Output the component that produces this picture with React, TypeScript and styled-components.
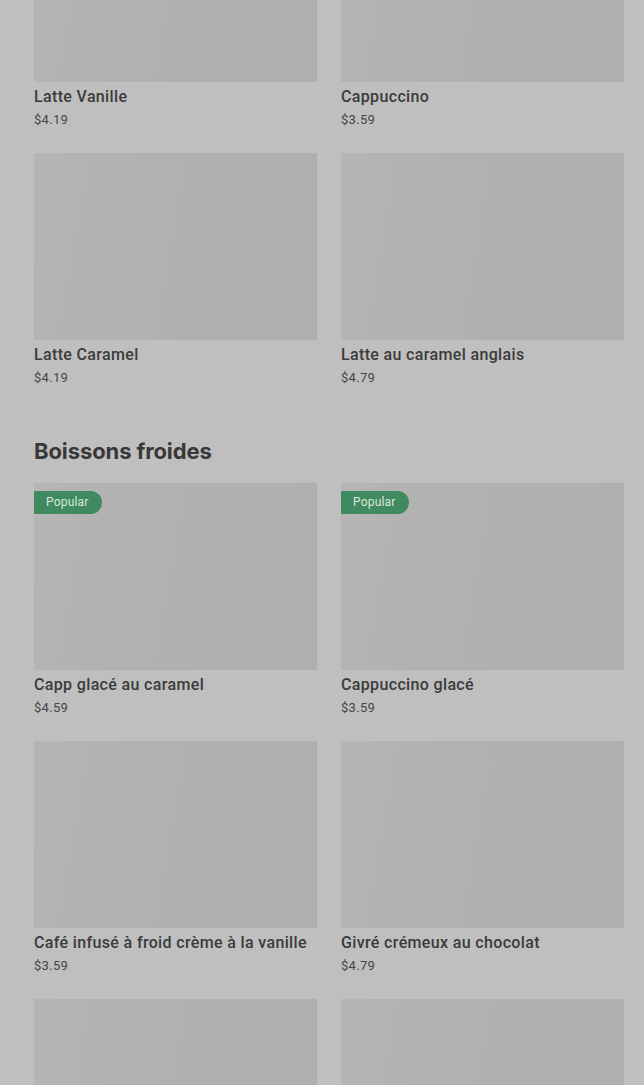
import React from 'react'
import styled, { createGlobalStyle } from 'styled-components'

const GlobalStyle = createGlobalStyle`
  html, body {
    margin: 0;
    padding: 0;
    background: #bfbfbf;
    overflow: hidden;
  }
  body {
    font-family: Roboto, "Liberation Sans", sans-serif;
    color: #3b3b3b;
  }
`

const Viewport = styled.div`
  height: 1085px;
  overflow: hidden;
`

// the menu is scrolled down a bit in the picture
const Menu = styled.main`
  display: flex;
  flex-direction: column;
  gap: 50px;
  margin-top: -151px;
  padding: 0 20px 0 34px;
`

const Section = styled.section`
  display: flex;
  flex-direction: column;
  gap: 18px;
`

const SectionTitle = styled.h2`
  font-family: Inter, "Noto Sans", sans-serif;
  font-size: 22px;
  font-weight: 700;
  letter-spacing: -0.1px;
  line-height: 28px;
  margin: 0;
  color: #383838;
`

const Grid = styled.div`
  display: grid;
  grid-template-columns: 1fr 1fr;
  column-gap: 24px;
  row-gap: 24px;
`

const Card = styled.div`
  display: flex;
  flex-direction: column;
`

const Picture = styled.div`
  position: relative;
  height: 187px;
  background: linear-gradient(100deg, #b5b5b5 0%, #b1b1b1 35%, #afafaf 100%);
`

const Badge = styled.span`
  position: absolute;
  top: 8px;
  left: 0;
  height: 23px;
  line-height: 23px;
  padding: 0 13px 0 12px;
  border-radius: 0 12px 12px 0;
  background: #3f8a5f;
  color: #d9e8dd;
  font-size: 12px;
  letter-spacing: 0.2px;
`

const Name = styled.div`
  margin-top: 5px;
  font-size: 16px;
  font-weight: 500;
  letter-spacing: 0.35px;
  line-height: 20px;
  color: #3b3b3b;
  white-space: nowrap;
`

const Price = styled.div`
  margin-top: 4px;
  font-size: 13px;
  letter-spacing: 0.3px;
  line-height: 18px;
  color: #454545;
`

type Item = { name: string; price: string; popular?: boolean }

const sections: { title: string; items: Item[] }[] = [
  {
    title: 'Boissons chaudes',
    items: [
      { name: 'Latte Vanille', price: '$4.19' },
      { name: 'Cappuccino', price: '$3.59' },
      { name: 'Latte Caramel', price: '$4.19' },
      { name: 'Latte au caramel anglais', price: '$4.79' },
    ],
  },
  {
    title: 'Boissons froides',
    items: [
      { name: 'Capp glacé au caramel', price: '$4.59', popular: true },
      { name: 'Cappuccino glacé', price: '$3.59', popular: true },
      { name: 'Café infusé à froid crème à la vanille', price: '$3.59' },
      { name: 'Givré crémeux au chocolat', price: '$4.79' },
      { name: 'Latte glacé', price: '$4.19' },
      { name: 'Moka glacé', price: '$4.59' },
    ],
  },
]

export default function App() {
  return (
    <>
      <GlobalStyle />
      <Viewport>
        <Menu>
          {sections.map(s => (
            <Section key={s.title}>
              <SectionTitle>{s.title}</SectionTitle>
              <Grid>
                {s.items.map(item => (
                  <Card key={item.name}>
                    <Picture>
                      {item.popular && <Badge>Popular</Badge>}
                    </Picture>
                    <Name>{item.name}</Name>
                    <Price>{item.price}</Price>
                  </Card>
                ))}
              </Grid>
            </Section>
          ))}
        </Menu>
      </Viewport>
    </>
  )
}
